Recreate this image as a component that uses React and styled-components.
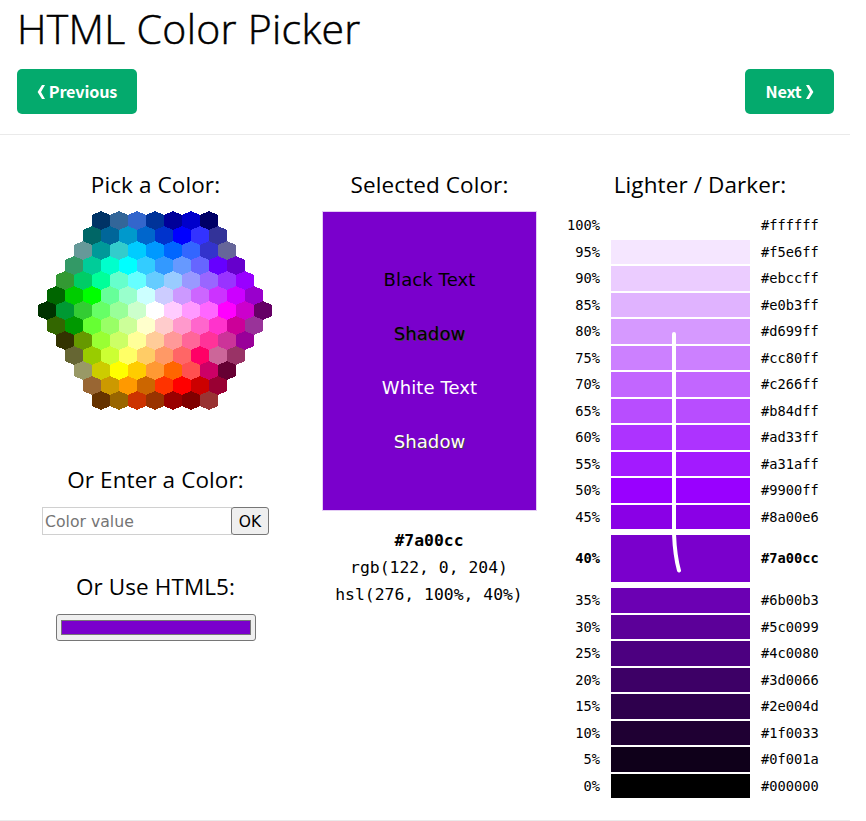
import React from "react";
import styled, { createGlobalStyle } from "styled-components";

const Global = createGlobalStyle`
  * { box-sizing: border-box; }
  html, body { margin: 0; background: #fff; color: #000; }
  body { height: 821px; overflow: hidden; font-family: "DejaVu Sans", sans-serif; }
  h1, h3 { margin: 0; font-family: "Open Sans", "Noto Sans", sans-serif; white-space: nowrap; }
`;

const Page = styled.main`
  width: 850px;
  height: 821px;
  display: flex;
  flex-direction: column;
`;

const Title = styled.h1`
  height: 58px;
  padding-left: 17px;
  font-size: 41px;
  font-weight: 300;
  line-height: 57px;
  letter-spacing: 0.3px;
  -webkit-text-stroke: 0.5px #000;
`;

const NavBar = styled.nav`
  display: flex;
  justify-content: space-between;
  padding: 11px 16px 0 17px;
`;

const NavButton = styled.button`
  width: ${(p) => p.$width}px;
  height: 45px;
  padding: 0;
  display: flex;
  align-items: center;
  justify-content: center;
  gap: 4px;
  border: 0;
  border-radius: 5px;
  background: #04aa6d;
  color: #fff;
  font: 700 16.2px/45px "Noto Sans CJK SC", sans-serif;
  letter-spacing: -0.15px;
`;

const Chevron = styled.svg`
  width: 8px;
  height: 14px;
  fill: #fff;
`;

const Rule = styled.hr`
  width: 850px;
  height: 1px;
  margin: ${(p) => p.$top}px 0 0;
  border: 0;
  background: #eaeaea;
`;

const Columns = styled.div`
  display: grid;
  grid-template-columns: 277px 271px 270px;
  padding-left: 17px;
  height: 685px;
`;

const Column = styled.section`
  display: flex;
  flex-direction: column;
  align-items: center;
  padding-top: 34px;
`;

const Heading = styled.h3`
  height: 34px;
  margin-top: ${(p) => p.$top || 0}px;
  font-size: 22.5px;
  font-weight: 400;
  line-height: 32px;
  letter-spacing: 0.1px;
`;

const HexMap = styled.svg`
  display: block;
  width: 234px;
  height: 199px;
  margin: 8px 1px 0 0;
`;

const EntryForm = styled.form`
  display: flex;
  height: 28px;
  margin-top: 9px;
`;

const ColorInput = styled.input`
  width: 190px;
  height: 28px;
  padding: 1px 3px 1px 2px;
  border: 1px solid #d0d0d0;
  font: 15.7px "DejaVu Sans", sans-serif;
  &::placeholder { color: #757575; opacity: 1; }
`;

const OkButton = styled.button`
  width: 38px;
  height: 28px;
  margin-left: -1px;
  padding: 2px 0 0;
  border: 1px solid #767676;
  border-radius: 3px;
  background: #efefef;
  color: #000;
  font: 15.5px "DejaVu Sans", sans-serif;
`;

const ColorWell = styled.div`
  width: 200px;
  height: 27px;
  margin-top: 9px;
  padding: 5px 4px 6px;
  border: 1px solid #767676;
  border-radius: 3px;
  background: #efefef;
`;

const WellSwatch = styled.div`
  height: 15px;
  border: 1px solid #777;
  background: #7a00cc;
`;

const Preview = styled.div`
  width: 215px;
  height: 300px;
  margin-top: 8px;
  padding-top: 41px;
  border: 1px solid #e4ccf5;
  background: #7a00cc;
  text-align: center;
`;

const Sample = styled.p`
  margin: 0;
  height: 54px;
  font-size: 18px;
  line-height: 54px;
  letter-spacing: 0.1px;
  color: ${(p) => (p.$light ? "#fff" : "#000")};
  text-shadow: ${(p) => (p.$shadow ? "1px 1px 0 #444" : "none")};
`;

const Values = styled.div`
  margin: 16px 1px 0 0;
  font: 16.4px/27px "DejaVu Sans Mono", monospace;
  text-align: center;
  white-space: pre;
`;

const Value = styled.div`
  font-weight: ${(p) => (p.$bold ? 700 : 400)};
`;

const Scale = styled.div`
  position: relative;
  width: 270px;
  margin-top: 9.25px;
`;

const ShadeRow = styled.div`
  display: grid;
  grid-template-columns: 36px 139px 69px;
  column-gap: 11px;
  align-items: center;
  height: ${(p) => (p.$current ? 57 : 26.5)}px;
  margin-left: -1px;
  font: ${(p) => (p.$current ? 700 : 400)} 13.7px/20px "DejaVu Sans Mono", monospace;
`;

const Percent = styled.span`
  padding-bottom: 0.9px;
  text-align: right;
`;

const Shade = styled.div`
  height: ${(p) => (p.$current ? 47 : 24.5)}px;
  background: ${(p) => p.$color};
`;

const Hex = styled.span`
  padding-bottom: 0.9px;
`;

const PenStroke = styled.svg`
  position: absolute;
  left: 46px;
  top: 0;
  width: 139px;
  height: 380px;
  fill: none;
  stroke: #fff;
  stroke-width: 4;
  stroke-linecap: round;
`;

const hexRows = [
  "003366 336699 3366cc 003399 000099 0000cc 000066",
  "006666 006699 0099cc 0066cc 0033cc 0000ff 3333ff 333399",
  "669999 009999 33cccc 00ccff 0099ff 0066ff 3366ff 3333cc 666699",
  "339966 00cc99 00ffcc 00ffff 33ccff 3399ff 6699ff 6666ff 6600ff 6600cc",
  "339933 00cc66 00ff99 66ffcc 66ffff 66ccff 99ccff 9999ff 9966ff 9933ff 9900ff",
  "006600 00cc00 00ff00 66ff99 99ffcc ccffff ccccff cc99ff cc66ff cc33ff cc00ff 9900cc",
  "003300 009933 33cc33 66ff66 99ff99 ccffcc ffffff ffccff ff99ff ff66ff ff00ff cc00cc 660066",
  "336600 009900 66ff33 99ff66 ccff99 ffffcc ffcccc ff99cc ff66cc ff33cc cc0099 993399",
  "333300 669900 99ff33 ccff66 ffff99 ffcc99 ff9999 ff6699 ff3399 cc3399 990099",
  "666633 99cc00 ccff33 ffff66 ffcc66 ff9966 ff6666 ff0066 cc6699 993366",
  "999966 cccc00 ffff00 ffcc00 ff9933 ff6600 ff5050 cc0066 660033",
  "996633 cc9900 ff9900 cc6600 ff3300 ff0000 cc0000 990033",
  "663300 996600 cc3300 993300 990000 800000 993333",
].map((row) => row.split(" "));

const shades = [
  "ffffff", "f5e6ff", "ebccff", "e0b3ff", "d699ff", "cc80ff", "c266ff",
  "b84dff", "ad33ff", "a31aff", "9900ff", "8a00e6", "7a00cc", "6b00b3",
  "5c0099", "4c0080", "3d0066", "2e004d", "1f0033", "0f001a", "000000",
].map((hex, i) => ({ hex: `#${hex}`, percent: 100 - i * 5 }));

function Honeycomb() {
  return (
    <HexMap viewBox="0 0 234 199" shapeRendering="crispEdges">
      {hexRows.map((row, r) =>
        row.map((color, c) => {
          const x = (13 - row.length) * 9 + c * 18;
          const y = r * 15;
          return (
            <polygon
              key={`${r}-${c}`}
              fill={`#${color}`}
              points={`${x + 9},${y} ${x + 18},${y + 4} ${x + 18},${y + 15} ${x + 9},${y + 19} ${x},${y + 15} ${x},${y + 4}`}
            />
          );
        })
      )}
    </HexMap>
  );
}

export default function App() {
  return (
    <>
      <Global />
      <Page>
        <Title>HTML Color Picker</Title>
        <NavBar>
          <NavButton $width={120}>
            <Chevron viewBox="0 0 8 14"><path d="M5 0H8L4 7L8 14H5L0.6 7Z" /></Chevron>
            Previous
          </NavButton>
          <NavButton $width={89}>
            Next
            <Chevron viewBox="0 0 8 14"><path d="M3 0H0L4 7L0 14H3L7.4 7Z" /></Chevron>
          </NavButton>
        </NavBar>
        <Rule $top={20} />
        <Columns>
          <Column>
            <Heading>Pick a Color:</Heading>
            <Honeycomb />
            <Heading $top={54}>Or Enter a Color:</Heading>
            <EntryForm>
              <ColorInput placeholder="Color value" />
              <OkButton type="button">OK</OkButton>
            </EntryForm>
            <Heading $top={36}>Or Use HTML5:</Heading>
            <ColorWell><WellSwatch /></ColorWell>
          </Column>
          <Column>
            <Heading>Selected Color:</Heading>
            <Preview>
              <Sample>Black Text</Sample>
              <Sample $shadow>Shadow</Sample>
              <Sample $light>White Text</Sample>
              <Sample $light $shadow>Shadow</Sample>
            </Preview>
            <Values>
              <Value $bold>#7a00cc</Value>
              <Value>rgb(122, 0, 204)</Value>
              <Value>hsl(276, 100%, 40%)</Value>
            </Values>
          </Column>
          <Column>
            <Heading>Lighter / Darker:</Heading>
            <Scale>
              {shades.map(({ hex, percent }) => (
                <ShadeRow key={hex} $current={percent === 40}>
                  <Percent>{percent}%</Percent>
                  <Shade $color={hex} $current={percent === 40} />
                  <Hex>{hex}</Hex>
                </ShadeRow>
              ))}
              <PenStroke viewBox="0 0 139 380">
                <path d="M63 122V322C63.5 334 65 348 68 358.5" />
              </PenStroke>
            </Scale>
          </Column>
        </Columns>
        <Rule $top={0} />
      </Page>
    </>
  );
}
